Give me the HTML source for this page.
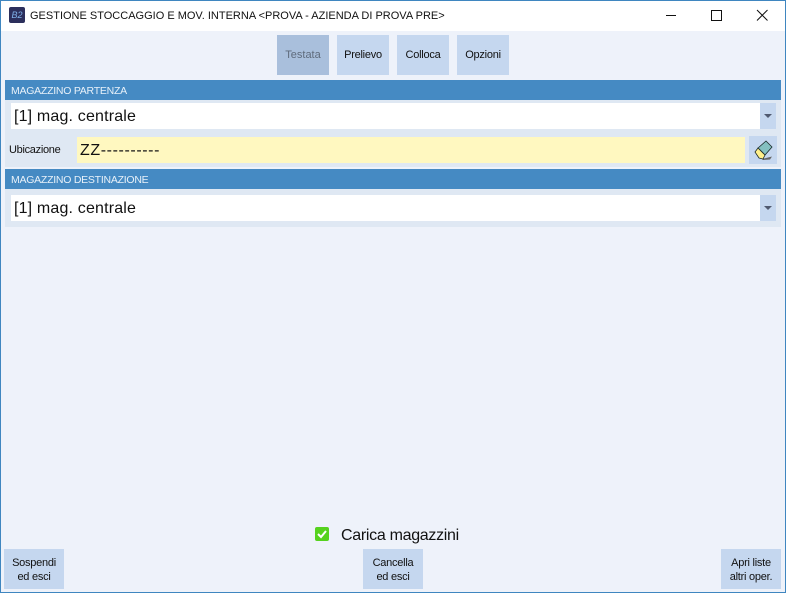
<!DOCTYPE html>
<html><head><meta charset="utf-8"><style>
html,body{margin:0;padding:0}
body{width:786px;height:593px;position:relative;overflow:hidden;background:#eef2fa;font-family:"Liberation Sans",sans-serif;color:#111}
div{position:absolute;white-space:nowrap;box-sizing:border-box}
svg{position:absolute}
.b{background:#c5d7ef;text-align:center;font-size:11px;color:#111;letter-spacing:-.25px}
.tab{top:35px;width:52px;height:40px;line-height:41px}
.h{left:5px;width:776px;height:20px;background:#458ac3;color:#e8f1f9;font-size:10.5px;line-height:22px;padding-left:6px;letter-spacing:-.25px}
.p{left:5px;width:776px;background:#dfe8f3}
.c{left:11px;width:749px;height:26px;background:#fff;font-size:16px;line-height:27px;padding-left:3px;letter-spacing:.17px}
.d{left:760px;width:16px;height:26px;background:#c5d7ef}
.d:after{content:"";position:absolute;left:4px;top:11px;border-left:4px solid transparent;border-right:4px solid transparent;border-top:4px solid #505a70}
.two{width:60px;height:40px;top:549px;line-height:14px;padding-top:7px}
</style></head><body>
<div style="left:0;top:0;width:786px;height:31px;background:#fff"></div>
<div style="left:9px;top:7px;width:16px;height:16px;background:#2c2f5c;border-radius:2px;color:#7fb0e8;font-size:9px;line-height:16px;text-align:center;font-style:italic">B2</div>
<div style="left:30px;top:9px;font-size:11px;line-height:15px;color:#111">GESTIONE STOCCAGGIO E MOV. INTERNA &lt;PROVA - AZIENDA DI PROVA PRE&gt;</div>
<svg style="left:640px;top:0" width="146" height="30" fill="none" stroke="#111" stroke-width="1"><path d="M26 15.5H36"/><path d="M71.5 10.5h10v10h-10z"/><path d="M117 10l10.5 10.5M127.500 10L117 20.500"/></svg>

<div class="b tab" style="left:277px;background:#a9bfdc;color:#5f6b7c;letter-spacing:0">Testata</div>
<div class="b tab" style="left:337px">Prelievo</div>
<div class="b tab" style="left:397px">Colloca</div>
<div class="b tab" style="left:457px">Opzioni</div>

<div class="p" style="top:100px;height:67px"></div>
<div class="h" style="top:80px">MAGAZZINO PARTENZA</div>
<div class="c" style="top:103px">[1] mag. centrale</div>
<div class="d" style="top:103px"></div>
<div style="left:9px;top:143px;font-size:11px;line-height:14px;letter-spacing:-.3px">Ubicazione</div>
<div style="left:77px;top:137px;width:668px;height:26px;background:#fff8c0;font-size:16px;line-height:27px;padding-left:3px;letter-spacing:.6px">ZZ----------</div>
<div style="left:749px;top:136px;width:28px;height:28px;background:#c5d7ef"></div>
<svg style="left:749px;top:136px" width="28" height="28">
<path d="M13 23L23 20.500 21 23.500 14 24z" fill="#666"/>
<path d="M9 12L17 5l6 6-7 8z" fill="#84c0c0" stroke="#1c2a2a" stroke-width=".8"/>
<path d="M6 16l3-4 7 7-2 4-4-1z" fill="#fff08a" stroke="#1c2a2a" stroke-width=".8"/>
</svg>

<div class="p" style="top:189px;height:38px"></div>
<div class="h" style="top:169px">MAGAZZINO DESTINAZIONE</div>
<div class="c" style="top:195px">[1] mag. centrale</div>
<div class="d" style="top:195px"></div>

<div style="left:315px;top:527px;width:14px;height:14px;background:#55d21e;border-radius:2px"></div>
<svg style="left:315px;top:527px" width="14" height="14" fill="none" stroke="#fff" stroke-width="2"><path d="M3 7l3 3 5-6"/></svg>
<div style="left:341px;top:527px;font-size:16px;line-height:18px;letter-spacing:-.3px">Carica magazzini</div>

<div class="b two" style="left:4px">Sospendi<br>ed esci</div>
<div class="b two" style="left:363px">Cancella<br>ed esci</div>
<div class="b two" style="left:721px">Apri liste<br>altri oper.</div>

<div style="left:0;top:0;width:786px;height:593px;border:1px solid #3f86c0"></div>
</body></html>
